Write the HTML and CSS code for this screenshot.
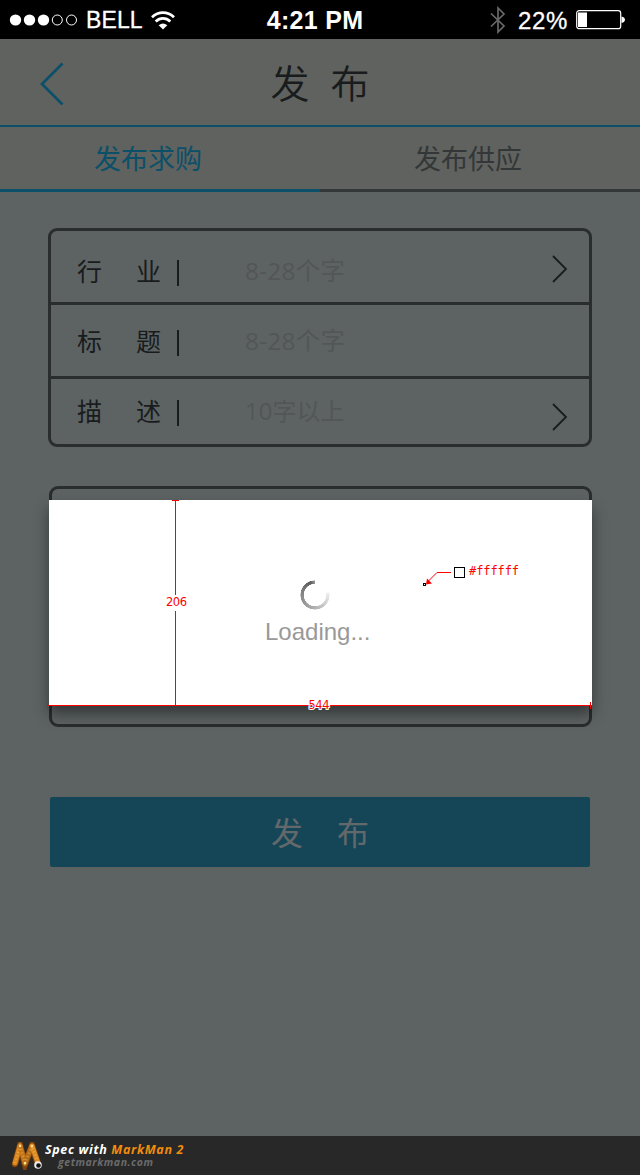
FILE: index.html
```html
<!DOCTYPE html>
<html lang="zh-CN">
<head>
<meta charset="utf-8">
<title>发布</title>
<link rel="stylesheet" href="styles.css">
</head>
<body>
<div class="screen">
  <header class="status">
    <div class="status-left">
      <svg class="signal" width="68" height="14" viewBox="0 0 68 14"><g fill="#fff"><ellipse cx="6.500" cy="7" rx="5.700" ry="5.500"/><ellipse cx="20.500" cy="7" rx="5.700" ry="5.500"/><ellipse cx="34.500" cy="7" rx="5.700" ry="5.500"/></g><g fill="none" stroke="#fff"><circle cx="48.300" cy="7" r="5"/><circle cx="62.500" cy="7" r="5"/></g></svg>
      <span class="carrier">BELL</span>
      <svg class="wifi" width="24" height="19" viewBox="0 0 24 19"><g fill="none" stroke="#fff" stroke-width="2.800"><path d="M1 6.200C7.500 .1 16.500 .1 23 6.200"/><path d="M4.700 10.500c4.300-4.100 10.300-4.100 14.600 0"/></g><path d="M12 18.500 7.700 14.300q4.300-3.800 8.600 0z" fill="#fff"/></svg>
    </div>
    <span class="clock">4:21 PM</span>
    <div class="status-right">
      <svg width="16" height="28" viewBox="0 0 16 28"><path d="M1 7.500 14 20l-6 6V2l6 6L1 20.500" fill="none" stroke="#686868" stroke-width="1.700"/></svg>
      <span class="percent">22%</span>
      <svg class="battery" width="50" height="20" viewBox="0 0 50 20"><rect x=".7" y=".7" width="44" height="18" rx="2.500" fill="none" stroke="#fff" stroke-width="1.200"/><path d="M2 2.500h9v14.500H2zM45.500 6.500q3.500 1 3.500 3.300T45.500 13z" fill="#fff"/></svg>
    </div>
  </header>

  <nav class="titlebar">
    <svg class="back" width="26" height="44" viewBox="0 0 26 44"><path d="M24.500 2.500 4 23l20.500 20.500" fill="none" stroke="#0b5068" stroke-width="2.800"/></svg>
    <h1 class="title">发<span class="title-second">布</span></h1>
  </nav>

  <div class="tabs">
    <div class="tab tab-active">发布求购</div>
    <div class="tab">发布供应</div>
  </div>

  <main class="content">
    <section class="form">
      <div class="row">
        <span class="label"><span>行</span><span>业</span></span><i class="bar"></i><span class="hint">8-28个字</span>
        <svg class="arrow" width="16" height="28" viewBox="0 0 16 28"><path d="m1 1 13 13L1 27" fill="none" stroke="#191c1d" stroke-width="1.800"/></svg>
      </div>
      <div class="row row-title">
        <span class="label"><span>标</span><span>题</span></span><i class="bar"></i><span class="hint">8-28个字</span>
      </div>
      <div class="row row-desc">
        <span class="label"><span>描</span><span>述</span></span><i class="bar"></i><span class="hint hint-desc">10字以上</span>
        <svg class="arrow arrow-low" width="16" height="28" viewBox="0 0 16 28"><path d="m1 1 13 13L1 27" fill="none" stroke="#191c1d" stroke-width="1.800"/></svg>
      </div>
    </section>

    <section class="panel">
      <div class="modal">
        <div class="spinner"></div>
        <div class="loading">Loading...</div>
        <svg class="marks" width="550" height="220" viewBox="0 0 550 220">
          <g fill="none" stroke="#f00" shape-rendering="crispEdges">
            <path d="M126 5.500h7M129.500 5v95M129.500 116v95M1 210.500h545M1.500 207v7M544.500 207v7"/>
          </g>
          <path d="M405 77.500H391L382 86.500" fill="none" stroke="#f00"/>
          <path d="m380 89.500 1-6 5 5z" fill="#f00"/>
          <g fill="#fff" stroke="#000" shape-rendering="crispEdges"><rect x="377.500" y="88.500" width="2" height="2"/><rect x="408.500" y="72.500" width="10" height="10"/></g>
          <g class="mark-text" fill="#f00">
            <text x="120" y="111" textLength="21">206</text>
            <text class="outlined" x="262.500" y="214" textLength="21">544</text>
            <text class="hex" x="423" y="80" textLength="50">#ffffff</text>
          </g>
        </svg>
      </div>
    </section>

    <div class="submit"><span>发</span><span>布</span></div>
  </main>

  <footer class="footer">
    <svg class="logo" width="32" height="28" viewBox="0 0 32 28"><g fill="none" stroke-linecap="round"><path d="M4 22 9 4l5 18 7-18 6 18" stroke="#80440b" stroke-width="6.500"/><path d="M4 21 9 4" stroke="#d98720" stroke-width="5"/><path d="m9 4 5 17" stroke="#c5761a" stroke-width="5"/><path d="m14 21 7-17" stroke="#b56c18" stroke-width="5"/><path d="m21 4 6 17" stroke="#dd8c25" stroke-width="5"/><path d="M4 21 9 4l5 17 7-17 6 17" stroke="#ffd078" stroke-width="2.500" stroke-linecap="butt" stroke-dasharray="1 2.500" opacity=".4"/></g><circle cx="9" cy="4" r="1.200" fill="#ffe09a"/><circle cx="21" cy="4" r="1.200" fill="#ffe09a"/><circle cx="14" cy="21" r="1.300" fill="#ffe09a"/><circle cx="27" cy="23" r="3.800" fill="#eee"/><circle cx="27.500" cy="23.500" r="2.300" fill="#111"/></svg>
    <div class="credit">
      <div class="credit-main">Spec with <span class="brand">MarkMan 2</span></div>
      <div class="credit-url">getmarkman.com</div>
    </div>
  </footer>
</div>
</body>
</html>
```
FILE: styles.css
```css
* { box-sizing: border-box; }
body { margin: 0; }
.screen {
  width: 640px;
  height: 1175px;
  display: flex;
  flex-direction: column;
  overflow: hidden;
  background: #5d6363;
  color: #191c1d;
  font-family: "Open Sans", "Noto Sans CJK SC", sans-serif;
}
.status {
  height: 39px;
  display: grid;
  grid-template-columns: 230px 170px 240px;
  align-items: center;
  background: #000;
  color: #fff;
  font-family: "Liberation Sans", Arial, sans-serif;
  font-size: 23px;
  line-height: 39px;
  -webkit-text-stroke: .3px #fff;
}
.status-left { display: flex; align-items: center; padding-left: 9px; }
.carrier { width: 58px; margin-left: 9px; padding-top: 1px; letter-spacing: .1px; }
.wifi { margin-left: 7px; }
.clock { text-align: center; font-weight: bold; font-size: 25px; letter-spacing: .3px; -webkit-text-stroke: 0; }
.status-right { display: flex; align-items: center; padding-left: 90px; }
.percent { margin-left: 12px; width: 50px; padding-top: 1px; font-size: 24px; letter-spacing: .6px; }
.battery { margin-left: 8px; }
.titlebar {
  height: 88px;
  display: grid;
  grid-template-columns: 38px 26px 512px 64px;
  align-items: center;
  background: #60625f;
  border-bottom: 2px solid #0b5068;
}
.back { grid-column: 2; }
.title {
  margin: 0;
  text-align: center;
  font-size: 39px;
  font-weight: 350;
  line-height: 86px;
  padding-top: 1px;
}
.title-second { margin-left: 21px; }
.tabs { height: 65px; display: grid; grid-template-columns: 1fr 1fr; background: #60625f; }
.tab {
  text-align: center;
  font-size: 27px;
  font-weight: 400;
  line-height: 63px;
  height: 65px;
  text-indent: -24px;
  color: #333738;
  border-bottom: 3px solid #333738;
}
.tab-active { color: #0b5068; border-color: #0b5068; }
.content { flex: 1; padding: 36px 48px 0; }
.form { height: 219px; border: 3px solid #292d2e; border-radius: 9px; }
.row {
  height: 74px;
  display: flex;
  align-items: flex-start;
  padding: 22px 21px 0 26px;
  border-bottom: 3px solid #292d2e;
  font-size: 25px;
  font-weight: 400;
  line-height: 36px;
}
.row-desc { height: 65px; padding-top: 14px; border: 0; }
.row-title { padding-top: 18px; }
.label { width: 84px; display: flex; justify-content: space-between; }
.bar { width: 2px; height: 26px; margin: 7px 0 0 16px; background: #191c1d; }
.hint { width: 240px; margin-left: 66px; color: #525657; white-space: nowrap; font-size: 24.500px; letter-spacing: .2px; }
.hint-desc { font-size: 24px; letter-spacing: 0; }
.arrow { margin-left: auto; margin-top: 2px; }
.arrow-low { margin-top: 10px; }
.panel {
  height: 241px;
  margin: 39px 0 0 1px;
  border: 3px solid #292d2e;
  border-radius: 9px;
}
.modal {
  position: relative;
  width: 543px;
  height: 206px;
  margin: 11px 0 0 -3px;
  padding-top: 80px;
  background: #fff;
  box-shadow: 0 8px 14px rgba(0, 0, 0, .45);
}
.spinner {
  width: 30px;
  height: 30px;
  margin-left: 251px;
  border-radius: 50%;
  background: conic-gradient(#fff 0deg 78deg, #eee 82deg, #aaa 190deg, #888 270deg, #5d5d5d 340deg, #aaa 365deg);
  -webkit-mask: radial-gradient(circle, transparent 11px, #000 11.500px 14.300px, transparent 14.800px);
  mask: radial-gradient(circle, transparent 11px, #000 11.500px 14.300px, transparent 14.800px);
}
.loading {
  margin: 7px 0 0 216px;
  color: #999;
  font: 24px/30px "Liberation Sans", Arial, sans-serif;
  white-space: nowrap;
}
.marks { position: absolute; left: -3px; top: -5px; }
.mark-text { font: 11.500px "DejaVu Sans", "Noto Sans", sans-serif; }
.outlined { stroke: #fff; stroke-width: 2px; paint-order: stroke; }
.hex { font: 12px "DejaVu Sans Mono", monospace; }
.submit {
  height: 70px;
  margin: 70px 2px 0;
  display: flex;
  justify-content: center;
  gap: 34px;
  border-radius: 2px;
  background: #154658;
  color: #63696a;
  font-size: 32px;
  font-weight: 400;
  line-height: 72px;
}
.footer {
  height: 39px;
  display: flex;
  align-items: flex-start;
  padding: 6px 0 0 11px;
  background: #282828;
  font-family: "Open Sans", sans-serif;
  font-style: italic;
  font-weight: bold;
}
.credit { margin-left: 2px; }
.credit-main { color: #fff; font-size: 12.500px; letter-spacing: .65px; line-height: 15px; white-space: nowrap; }
.brand { color: #f28c0c; }
.credit-url { margin-left: 13px; color: #6b6b6b; font-size: 10.500px; letter-spacing: .55px; line-height: 11px; }
```
